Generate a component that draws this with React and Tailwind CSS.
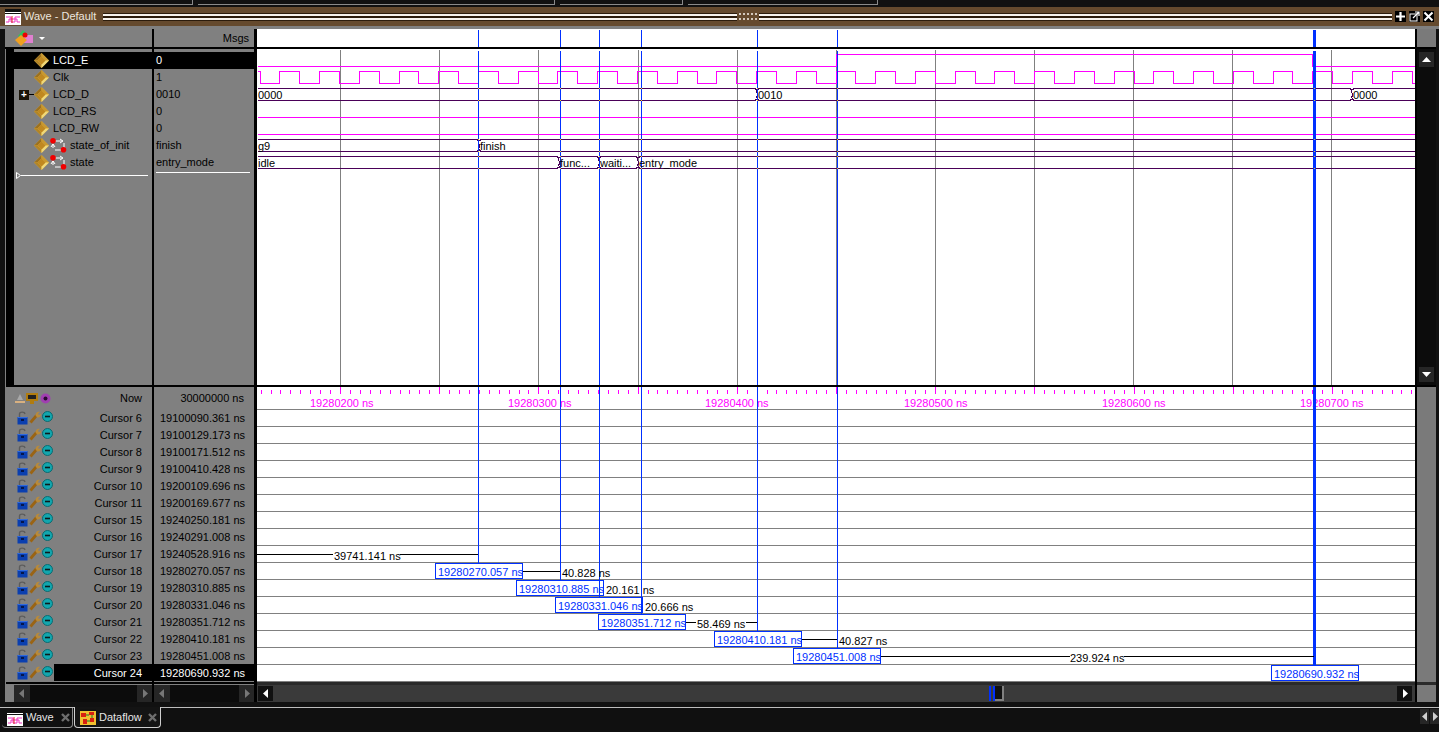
// App.jsx - Wave window
const BLUE = '#0030ff';
const MAGENTA = '#ff00ff';
const BUS = '#4a0058';

const upperSignals = [
  { name: 'LCD_E', value: '0', selected: true },
  { name: 'Clk', value: '1' },
  { name: 'LCD_D', value: '0010', expand: true },
  { name: 'LCD_RS', value: '0' },
  { name: 'LCD_RW', value: '0' },
  { name: 'state_of_init', value: 'finish', isEnum: true },
  { name: 'state', value: 'entry_mode', isEnum: true },
];

const cursors = [
  ['Cursor 6', '19100090.361 ns'],
  ['Cursor 7', '19100129.173 ns'],
  ['Cursor 8', '19100171.512 ns'],
  ['Cursor 9', '19100410.428 ns'],
  ['Cursor 10', '19200109.696 ns'],
  ['Cursor 11', '19200169.677 ns'],
  ['Cursor 15', '19240250.181 ns'],
  ['Cursor 16', '19240291.008 ns'],
  ['Cursor 17', '19240528.916 ns'],
  ['Cursor 18', '19280270.057 ns'],
  ['Cursor 19', '19280310.885 ns'],
  ['Cursor 20', '19280331.046 ns'],
  ['Cursor 21', '19280351.712 ns'],
  ['Cursor 22', '19280410.181 ns'],
  ['Cursor 23', '19280451.008 ns'],
  ['Cursor 24', '19280690.932 ns'],
];

const gridX = [340, 439, 538, 638, 737, 836, 935, 1034, 1133, 1232, 1331];
const blueX = [478, 560, 599, 641, 757, 837];

// clock edges
function clockPath() {
  let d = 'M257 71 L260 71 L260 83';
  let level = 83;
  for (let n = -5; n < 24; n++) {
    const rise = Math.round(478 + 39.73 * n);
    const fall = Math.round(478 + 39.73 * n + 19.87);
    if (rise > 1414) break;
    d += ` L${rise} 83 L${rise} 71`;
    level = 71;
    if (fall > 1414) break;
    d += ` L${fall} 71 L${fall} 83`;
    level = 83;
  }
  return d + ` L1415 ${level}`;
}

function busPath(top, bottom, edges) {
  const stops = [257, ...edges, 1415];
  let d = '';
  const mid = (top + bottom) / 2;
  stops.slice(0, -1).forEach((from, i) => {
    const to = stops[i + 1];
    const a = i === 0 ? from : from + 1;
    const b = i === stops.length - 2 ? to : to - 1;
    d += ` M${a} ${top} L${b} ${top}`;
    d += ` M${a} ${bottom} L${b} ${bottom}`;
    if (i !== stops.length - 2) {
      d += ` M${b} ${top} L${to} ${top + 2} L${to + 1} ${mid} L${to} ${bottom - 2} L${b} ${bottom}`;
      d += ` M${to + 2} ${top} L${to + 1} ${top + 2} M${to + 2} ${bottom} L${to + 1} ${bottom - 2}`;
    }
  });
  return d;
}

function Diamond() {
  return (
    <svg width="15" height="15" viewBox="0 0 15 15" className="shrink-0">
      <polygon points="7.5,0 15,7.5 7.5,15 0,7.5" fill="#e0b040" />
      <polygon points="7.5,0 0,7.5 3.5,7.5 7.5,3.5" fill="#9a7020" />
      <polygon points="7.5,0 15,7.5 11.5,7.5 7.5,3.5" fill="#c89830" />
      <polygon points="0,7.5 7.5,15 7.5,11.5 3.5,7.5" fill="#b08428" />
      <polygon points="15,7.5 7.5,15 7.5,11.5 11.5,7.5" fill="#f0d878" />
      <polygon points="7.5,3.5 11.5,7.5 7.5,11.5 3.5,7.5" fill="#c08820" />
    </svg>
  );
}

function EnumIcon() {
  return (
    <svg width="17" height="15" viewBox="0 0 17 15" className="shrink-0 ml-px mr-[3px]">
      <path d="M5 3 H12 M14 5 V10 M12 12 H5 M3 10 V6" stroke="#fff" strokeWidth="1" fill="none" />
      <path d="M10 1 L13 3 L10 5 M1 9 L3 6 L5 9" stroke="#fff" strokeWidth="1" fill="none" />
      <circle cx="3" cy="2.8" r="2.8" fill="#f00000" />
      <circle cx="13.5" cy="11.8" r="2.8" fill="#f00000" />
    </svg>
  );
}

function LockIcon() {
  return (
    <svg width="11" height="14" viewBox="0 0 11 14" className="shrink-0">
      <path d="M2.5 6 V3 C2.5 0.5 7.5 0.5 8 3" stroke="#5c5c5c" strokeWidth="1.4" fill="none" />
      <rect x="0.5" y="6" width="10" height="7.5" fill="#0a3fb0" />
      <rect x="4" y="8" width="3" height="2" fill="#05164a" />
      <rect x="0.5" y="6" width="10" height="1" fill="#2f6ae0" />
    </svg>
  );
}

function WrenchIcon() {
  return (
    <svg width="12" height="13" viewBox="0 0 12 13" className="shrink-0">
      <path d="M1.5 11.5 L7.5 4.5" stroke="#9a6414" strokeWidth="2.8" />
      <path d="M6.5 4.5 C6.5 1.5 8.5 0.2 11 0.8 L9 2.8 L10 4.2 L12 2.5 C12.3 5.5 10 7.2 8 6.2 Z" fill="#b88a3a" />
    </svg>
  );
}

function MinusCircle() {
  return (
    <svg width="11" height="11" viewBox="0 0 11 11" className="shrink-0 -mt-[3px]">
      <circle cx="5.5" cy="5.5" r="5" fill="#12a6ae" stroke="#0b6a70" strokeWidth="1" />
      <rect x="3" y="4.7" width="5" height="1.6" fill="#0b1a1c" />
    </svg>
  );
}

function CursorRow({ label, selected }) {
  return (
    <div className="flex h-[17px] items-center pl-[12px]">
      <div className="flex w-[37px] shrink-0 items-center gap-px">
        <LockIcon />
        <WrenchIcon />
        <MinusCircle />
      </div>
      <div className={`flex h-full flex-1 items-center justify-end pt-px pr-[10px] ${selected ? 'bg-black text-white' : 'text-black'}`}>
        {label}
      </div>
    </div>
  );
}

function UpperRow({ signal }) {
  return (
    <div className={`flex h-[17px] items-center ${signal.selected ? 'bg-black text-white' : 'text-black'}`}>
      <div className="flex w-[20px] shrink-0 items-center">
        {signal.expand && (
          <>
            <div className="ml-[5px] flex h-[10px] w-[10px] items-center justify-center bg-[#1a1408] text-[10px] leading-none font-bold text-white">+</div>
            <div className="h-px w-[5px] bg-black" />
          </>
        )}
      </div>
      <Diamond />
      {signal.isEnum ? <EnumIcon /> : <div className="w-[4px]" />}
      <span>{signal.name}</span>
    </div>
  );
}

function HScroll() {
  return (
    <div className="flex h-[17px] bg-[#0c0c0c]">
      <div className="flex w-[16px] items-center justify-center bg-[#262626]">
        <ArrowLeft color="#777" />
      </div>
      <div className="flex-1" />
      <div className="flex w-[15px] items-center justify-center bg-[#262626]">
        <ArrowRight color="#777" />
      </div>
    </div>
  );
}

function ArrowLeft({ color }) {
  return (
    <svg width="6" height="9" viewBox="0 0 6 9">
      <polygon points="5,0 5,9 0,4.5" fill={color} />
    </svg>
  );
}

function ArrowRight({ color }) {
  return (
    <svg width="6" height="9" viewBox="0 0 6 9">
      <polygon points="1,0 1,9 6,4.5" fill={color} />
    </svg>
  );
}

function CloseMark() {
  return (
    <svg width="9" height="9" viewBox="0 0 9 9" className="shrink-0">
      <path d="M1 1 L8 8 M8 1 L1 8" stroke="#6e6e6e" strokeWidth="2.4" />
    </svg>
  );
}

function WaveIcon() {
  return (
    <svg width="16" height="16" viewBox="0 0 16 16" className="shrink-0">
      <rect width="16" height="16" fill="#fff" />
      <rect width="16" height="3" fill="#111" />
      <rect y="4" width="16" height="1" fill="#111" />
      <path d="M1 8 H6 V13 H10 V8 H15 M1 13 H4 V10 H12 V13 H15" stroke="#f030c0" strokeWidth="1" fill="none" />
      <path d="M7 7 V14" stroke="#e02020" strokeWidth="1" />
    </svg>
  );
}

function DataflowIcon() {
  return (
    <svg width="16" height="16" viewBox="0 0 16 16" className="shrink-0">
      <rect width="16" height="16" fill="#f0c030" />
      <rect width="16" height="2" fill="#111" />
      <rect x="1" y="4" width="5" height="4" fill="#d82010" />
      <rect x="9" y="3" width="5" height="3" fill="#d82010" />
      <rect x="3" y="10" width="4" height="5" fill="#d82010" />
      <rect x="10" y="9" width="4" height="4" fill="#d82010" />
      <path d="M6 6 H9 M7 12 H10 M12 6 V9" stroke="#108030" strokeWidth="1" />
    </svg>
  );
}

function WavePane() {
  const clockD = clockPath();
  const buses = [
    busPath(88, 100, [756, 1351]),
    busPath(139, 151, [478]),
    busPath(156, 168, [558, 598, 637]),
  ];
  const busYs = [88, 100, 139, 151, 156, 168];
  return (
    <svg width="1158" height="356" viewBox="257 29 1158 356" className="block bg-white" shapeRendering="crispEdges">
      <g fill="#808080">
        {gridX.map((x) => (
          <rect key={x} x={x} y="50" width="1" height="335" />
        ))}
      </g>
      <g transform="translate(0.5 0.5)" fill="none" strokeWidth="1">
        <path d="M257 66 H836 V54 H1312 V66 H1415" stroke={MAGENTA} />
        <path d={clockD} stroke={MAGENTA} />
        <path d="M257 117 H1415 M257 134 H1415" stroke={MAGENTA} />
        {buses.map((d, i) => (
          <path key={i} d={d} stroke={BUS} />
        ))}
      </g>
      <g fill={BLUE}>
        {blueX.map((x) => (
          <g key={x}>
            <rect x={x} y="30" width="1" height="17" />
            <rect x={x} y="51" width="1" height="334" />
          </g>
        ))}
        <rect x="1313" y="30" width="3" height="17" />
        <rect x="1313" y="51" width="3" height="334" />
      </g>
      <g fill="#e8d020">
        {busYs.map((y) =>
          [...blueX, 1314].map((x) => <rect key={`${x}-${y}`} x={x} y={y} width="1" height="1" />)
        )}
      </g>
      <rect x="257" y="47" width="1158" height="2" fill="#000" />
      <g fontSize="11" fill="#000" shapeRendering="auto">
        <text x="258" y="99">0000</text>
        <text x="758" y="99">0010</text>
        <text x="1353" y="99">0000</text>
        <text x="258" y="150">g9</text>
        <text x="480" y="150">finish</text>
        <text x="258" y="167">idle</text>
        <text x="560" y="167">func...</text>
        <text x="600" y="167">waiti...</text>
        <text x="639" y="167">entry_mode</text>
      </g>
    </svg>
  );
}

function CursorPane() {
  const ticks = [];
  for (let k = -8; k <= 108; k++) {
    ticks.push({ x: Math.round(340 + 9.92 * k), major: k % 10 === 0 });
  }
  const labels = [
    [310, '19280200 ns'],
    [508, '19280300 ns'],
    [705, '19280400 ns'],
    [904, '19280500 ns'],
    [1102, '19280600 ns'],
    [1300, '19280700 ns'],
  ];
  const boxes = [
    [435, 563, '19280270.057 ns'],
    [516, 580, '19280310.885 ns'],
    [555, 597, '19280331.046 ns'],
    [598, 614, '19280351.712 ns'],
    [714, 631, '19280410.181 ns'],
    [793, 648, '19280451.008 ns'],
    [1271, 665, '19280690.932 ns'],
  ];
  const drops = [
    [478, 563, 1],
    [560, 580, 1],
    [599, 597, 1],
    [641, 614, 1],
    [757, 631, 1],
    [837, 648, 1],
    [1313, 665, 3],
  ];
  const rows = Array.from({ length: 17 }, (_, i) => 409 + i * 17);
  return (
    <svg width="1158" height="295" viewBox="257 387 1158 295" className="block bg-white" shapeRendering="crispEdges">
      <g fill="#808080">
        {rows.map((y) => (
          <rect key={y} x="257" y={y} width="1158" height="1" />
        ))}
      </g>
      <g fill={MAGENTA}>
        {ticks.map((t) => (
          <rect key={t.x} x={t.x} y={t.major ? 387 : 390} width="1" height={t.major ? 7 : 4} />
        ))}
      </g>
      <g fontSize="11" fill={MAGENTA} shapeRendering="auto">
        {labels.map(([x, text]) => (
          <text key={x} x={x} y="407">{text}</text>
        ))}
      </g>
      <g fill={BLUE}>
        {drops.map(([x, y, w]) => (
          <rect key={x} x={x} y="387" width={w} height={y - 387} />
        ))}
      </g>
      <g fill="#000">
        <rect x="257" y="554" width="76" height="1" />
        <rect x="400" y="554" width="78" height="1" />
        <rect x="523" y="571" width="37" height="1" />
        <rect x="686" y="622" width="10" height="1" />
        <rect x="746" y="622" width="11" height="1" />
        <rect x="802" y="639" width="35" height="1" />
        <rect x="881" y="656" width="189" height="1" />
        <rect x="1124" y="656" width="190" height="1" />
      </g>
      <g fontSize="11" fill="#000" shapeRendering="auto">
        <text x="334" y="560">39741.141 ns</text>
        <text x="562" y="577">40.828 ns</text>
        <text x="606" y="594">20.161 ns</text>
        <text x="645" y="611">20.666 ns</text>
        <text x="697" y="628">58.469 ns</text>
        <text x="839" y="645">40.827 ns</text>
        <text x="1070" y="662">239.924 ns</text>
      </g>
      {boxes.map(([x, y, text]) => (
        <g key={x}>
          <rect x={x + 0.5} y={y + 0.5} width="87" height="15" fill="none" stroke={BLUE} />
          <text x={x + 3} y={y + 13} fontSize="11" fill={BLUE} shapeRendering="auto">{text}</text>
        </g>
      ))}
    </svg>
  );
}

function TopStrip() {
  return (
    <div className="flex h-[7px] bg-[#111]">
      <div className="h-[5px] w-[193px] border-r border-b border-[#8a8a8a]" />
      <div className="ml-[5px] h-[5px] w-[357px] border-r border-b border-[#8a8a8a]" />
      <div className="ml-[5px] h-[5px] w-[123px] border-r border-b border-[#8a8a8a]" />
      <div className="ml-[5px] h-[5px] w-[190px] border-r border-b border-[#8a8a8a]" />
    </div>
  );
}

function TitleStripes() {
  return (
    <div className="flex h-[8px] flex-1 flex-col">
      <div className="h-px bg-[#2c1c0c]" />
      <div className="h-[2px] bg-[#f7f2ec]" />
      <div className="h-[2px] bg-[#2c1c0c]" />
      <div className="h-[2px] bg-[#f7f2ec]" />
      <div className="h-px bg-[#2c1c0c]" />
    </div>
  );
}

function TitleBar() {
  return (
    <div className="flex h-[19px] items-center bg-[#654a2e] pl-[5px]">
      <WaveIcon />
      <span className="ml-[3px] w-[79px] text-[11px] text-[#ece6de]">Wave - Default</span>
      <TitleStripes />
      <svg width="22" height="8" viewBox="0 0 22 8" className="shrink-0">
        <rect width="22" height="8" fill="#654a2e" />
        <path d="M2 1 H21 M2 6 H21" stroke="#f7f2ec" strokeWidth="1.4" strokeDasharray="2 2" />
      </svg>
      <TitleStripes />
      <div className="ml-[3px] flex w-[44px] shrink-0 items-center gap-[3px]">
        <svg width="11" height="11" viewBox="0 0 11 11" className="bg-black">
          <path d="M5.5 1 V10 M1 5.5 H10" stroke="#fff" strokeWidth="2.2" />
        </svg>
        <svg width="11" height="11" viewBox="0 0 11 11" className="bg-black">
          <rect x="1" y="3" width="7" height="7" stroke="#fff" fill="none" />
          <path d="M4 7 L10 1 M6 1 H10 V5" stroke="#fff" strokeWidth="1.2" fill="none" />
        </svg>
        <svg width="11" height="11" viewBox="0 0 11 11" className="bg-black">
          <path d="M1.5 1.5 L9.5 9.5 M9.5 1.5 L1.5 9.5" stroke="#fff" strokeWidth="2" />
        </svg>
      </div>
    </div>
  );
}

function TabBar() {
  return (
    <div className="flex h-[25px] items-start border-t border-[#bdbdbd] bg-[#101010]">
      <div className="ml-[2px] flex h-[20px] w-[71px] items-center rounded-b-sm border-r border-b border-[#8a8a8a] pl-[5px]">
        <WaveIcon />
        <span className="ml-[3px] text-[#e6e6e6]">Wave</span>
        <div className="ml-[7px]"><CloseMark /></div>
      </div>
      <div className="-mt-px ml-px flex h-[21px] w-[87px] items-center rounded-b-sm border-x border-b border-[#cfcfcf] bg-[#141414] pl-[5px]">
        <DataflowIcon />
        <span className="ml-[3px] text-[#e6e6e6]">Dataflow</span>
        <div className="ml-[6px]"><CloseMark /></div>
      </div>
      <div className="flex-1" />
      <div className="flex gap-px pt-px">
        <div className="flex h-[15px] w-[9px] items-center justify-center bg-[#262626]">
          <ArrowLeft color="#cfcfcf" />
        </div>
        <div className="flex h-[15px] w-[9px] items-center justify-center bg-[#262626]">
          <ArrowRight color="#cfcfcf" />
        </div>
      </div>
    </div>
  );
}

export default function App() {
  return (
    <div className="h-[732px] w-[1439px] overflow-hidden bg-[#111] font-['Liberation_Sans',sans-serif] text-[11px]">
      <TopStrip />
      <TitleBar />
      <div className="h-[3px] bg-[#808080]" />

      <div className="flex h-[673px] pl-[5px]">
        {/* names column */}
        <div className="flex w-[147px] flex-col bg-[#808080]">
          <div className="flex h-[18px] items-center pl-[9px]">
            <svg width="20" height="16" viewBox="0 0 20 16">
              <polygon points="9,0 15,6 9,11 4,6" fill="#30c060" />
              <rect x="10" y="5" width="9" height="8" fill="#e080d0" />
              <polygon points="7,5 13,10 7,16 1,10" fill="#f0a020" />
              <circle cx="11" cy="5" r="2.5" fill="#f00000" />
            </svg>
            <svg width="6" height="3" viewBox="0 0 6 3" className="ml-[5px]">
              <polygon points="0,0 6,0 3,3" fill="#fff" />
            </svg>
          </div>
          <div className="h-[2px] bg-black" />
          <div className="flex h-[336px]">
            <div className="ml-px w-[8px] bg-black" />
            <div className="flex-1 pt-[3px]">
              {upperSignals.map((s) => (
                <UpperRow key={s.name} signal={s} />
              ))}
              <div className="mt-[1px] flex items-center pl-[2px]">
                <svg width="5" height="7" viewBox="0 0 5 7" className="shrink-0">
                  <path d="M0.5 0.5 V6.5 L4.5 3.5 Z" stroke="#fff" fill="none" />
                </svg>
                <div className="h-px w-[127px] bg-white" />
              </div>
            </div>
          </div>
          <div className="ml-px h-[2px] bg-black" />
          <div className="h-[295px]">
            <div className="flex h-[22px] items-center pl-[10px] text-black">
              <div className="flex w-[40px] shrink-0 items-center gap-px">
                <svg width="10" height="10" viewBox="0 0 10 10">
                  <path d="M0 8 H10 V10 H0 Z" fill="#d8b080" />
                  <path d="M2 7 L5 1 L8 7 Z" fill="#a8a8a8" />
                </svg>
                <svg width="12" height="11" viewBox="0 0 12 11">
                  <rect width="12" height="8" fill="#b07c10" />
                  <rect x="2" y="2" width="8" height="4" fill="#202020" />
                  <rect x="4" y="8" width="4" height="3" fill="#b07c10" />
                </svg>
                <svg width="11" height="11" viewBox="0 0 11 11" className="ml-px">
                  <circle cx="5.5" cy="5.5" r="5" fill="#a040b0" />
                  <circle cx="5.5" cy="5.5" r="2" fill="#2a0a30" />
                </svg>
              </div>
              <div className="flex-1 pr-[10px] text-right">Now</div>
            </div>
            {cursors.map(([label], i) => (
              <CursorRow key={label} label={label} selected={i === cursors.length - 1} />
            ))}
          </div>
          <div className="flex h-[3px] flex-col">
            <div className="ml-px h-[2px] bg-black" />
          </div>
          <div className="pl-[9px]">
            <HScroll />
          </div>
        </div>
        <div className="w-[2px] bg-black" />

        {/* values column */}
        <div className="flex w-[100px] flex-col bg-[#808080]">
          <div className="flex h-[18px] items-center justify-end pr-[5px] text-black">Msgs</div>
          <div className="h-[2px] bg-black" />
          <div className="h-[336px] pt-[3px]">
            {upperSignals.map((s) => (
              <div key={s.name} className={`flex h-[17px] items-center pl-[2px] ${s.selected ? 'bg-black text-white' : 'text-black'}`}>
                {s.value}
              </div>
            ))}
            <div className="mt-[1px] ml-[2px] h-px w-[94px] bg-white" />
          </div>
          <div className="h-[2px] bg-black" />
          <div className="h-[295px]">
            <div className="flex h-[22px] items-center justify-end pr-[10px] text-black">30000000 ns</div>
            {cursors.map(([label, time], i) => (
              <div key={label} className={`flex h-[17px] items-center justify-end pt-px pr-[9px] ${i === cursors.length - 1 ? 'bg-black text-white' : 'text-black'}`}>
                {time}
              </div>
            ))}
          </div>
          <div className="h-[3px]">
            <div className="h-[2px] bg-black" />
          </div>
          <HScroll />
        </div>
        <div className="w-[3px] bg-black" />

        {/* wave canvas */}
        <div className="flex w-[1158px] flex-col">
          <WavePane />
          <div className="h-[2px] bg-black" />
          <CursorPane />
          <div className="h-[3px] bg-[#2a2a2a]" />
          <div className="flex h-[17px] items-center bg-[#3a3a3a]">
            <div className="ml-px flex h-[15px] w-[15px] items-center justify-center bg-[#111]">
              <ArrowLeft color="#fff" />
            </div>
            <div className="ml-[716px] h-[15px] w-[2px] bg-[#0030ff]" />
            <div className="ml-[2px] h-[15px] w-[2px] bg-[#0030ff]" />
            <div className="h-[15px] w-[9px] border-r-2 border-b-2 border-[#808080] bg-[#111]" />
            <div className="flex-1" />
            <div className="mr-[3px] flex h-[15px] w-[15px] items-center justify-center bg-[#111]">
              <ArrowRight color="#fff" />
            </div>
          </div>
        </div>
        <div className="w-[2px] bg-black" />

        {/* vertical scrollbar */}
        <div className="flex w-[19px] flex-col">
          <div className="h-[18px] bg-[#7a7a7a]" />
          <div className="h-[2px] bg-black" />
          <div className="flex h-[336px] flex-col justify-between bg-[#0c0c0c] px-[2px] py-[3px]">
            <div className="flex h-[15px] items-center justify-center bg-[#262626]">
              <svg width="9" height="5" viewBox="0 0 9 5"><polygon points="0,5 9,5 4.5,0" fill="#fff" /></svg>
            </div>
            <div className="flex h-[15px] items-center justify-center bg-[#262626]">
              <svg width="9" height="5" viewBox="0 0 9 5"><polygon points="0,0 9,0 4.5,5" fill="#fff" /></svg>
            </div>
          </div>
          <div className="h-[2px] bg-black" />
          <div className="h-[295px] bg-[#7a7a7a]" />
          <div className="h-[3px] bg-[#2a2a2a]" />
          <div className="h-[17px] bg-[#7a7a7a]" />
        </div>
      </div>

      <div className="h-[5px]" />
      <TabBar />
    </div>
  );
}
